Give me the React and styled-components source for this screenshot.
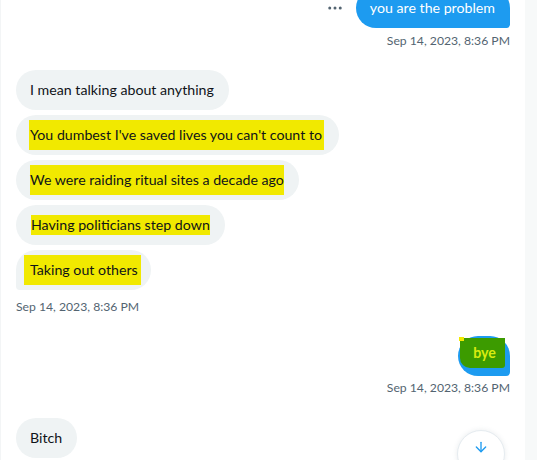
import React from 'react';
import styled, { createGlobalStyle } from 'styled-components';
import { Ellipsis, ArrowDown } from 'lucide-react';

const GlobalStyle = createGlobalStyle`
  html, body {
    margin: 0;
    padding: 0;
    background: #ffffff;
    overflow: hidden;
  }
  body {
    font-family: Lato, "Liberation Sans", sans-serif;
    color: #0f1419;
  }
`;

const Page = styled.div`
  display: flex;
  width: 537px;
  height: 460px;
  overflow: hidden;
  position: relative;
`;

const Conversation = styled.section`
  flex: 1;
  display: flex;
  flex-direction: column;
  padding: 0 15px 0 15px;
  border-left: 1px solid #f3f5f6;
`;

const Rail = styled.div`
  width: 12px;
  background: #f7f9f9;
`;

const Group = styled.div`
  display: flex;
  flex-direction: column;
  align-items: ${(p) => (p.$sent ? 'flex-end' : 'flex-start')};
  gap: 5px;
  margin-top: ${(p) => p.$top}px;
`;

const Row = styled.div`
  display: flex;
  align-items: center;
  gap: 12px;
`;

const More = styled.span`
  display: flex;
  color: #536471;
`;

const Bubble = styled.div`
  box-sizing: border-box;
  height: 40px;
  display: flex;
  align-items: center;
  padding: 0 ${(p) => p.$padRight ?? 15}px 0 14px;
  font-size: 14.2px;
  line-height: 20px;
  white-space: nowrap;
  border-radius: 22px;
  background: ${(p) => (p.$sent ? '#1d9bf0' : '#eff3f4')};
  color: ${(p) => (p.$sent ? '#ffffff' : '#0f1419')};
  ${(p) => p.$tail && (p.$sent ? 'border-bottom-right-radius: 4px;' : 'border-bottom-left-radius: 4px;')}
`;

const ByeBubble = styled(Bubble)`
  width: 52px;
  padding: 2px 5px 8px 2px;
  align-items: stretch;
  border-radius: 20px 20px 4px 20px;
`;

const Mark = styled.span`
  background: #f1e900;
  padding: 5px ${(p) => p.$right || 0}px 5px ${(p) => p.$left || 0}px;
  margin-left: ${(p) => -(p.$left || 0)}px;
`;

const Splash = styled.span`
  position: relative;
  flex: 1;
  display: flex;
  align-items: center;
  justify-content: center;
  padding-left: 4px;
  background: #3c9b00;
  color: #d9ec10;
  font-weight: 700;
  border-radius: 0 0 3px 10px;

  &::before {
    content: '';
    position: absolute;
    left: -1px;
    top: -1px;
    width: 5px;
    height: 4px;
    background: #f1e900;
  }
`;

const Stamp = styled.div`
  font-size: 12.2px;
  line-height: 16px;
  color: #536471;
  margin-top: ${(p) => p.$top || 0}px;
`;

const DownButton = styled.button`
  position: absolute;
  left: 457px;
  top: 430px;
  width: 48px;
  height: 48px;
  border-radius: 50%;
  background: #ffffff;
  border: 1px solid #e6ecf0;
  box-shadow: 0 0 5px rgba(101, 119, 134, 0.14);
  color: #1d9bf0;
  display: flex;
  align-items: flex-start;
  justify-content: center;
  padding-top: 8px;
  box-sizing: border-box;
`;

const received = [
  { text: 'I mean talking about anything' },
  { text: "You dumbest I've saved lives you can't count to", mark: [1, 2] },
  { text: 'We were raiding ritual sites a decade ago', mark: [0, 0] },
  { text: 'Having politicians step down', mark: [-1, 1] },
  { text: 'Taking out others', mark: [6, 3], padRight: 10 },
];

const App = () => {
  return (
    <Page>
      <GlobalStyle />
      <Conversation>
        <Group $sent $top={-12}>
          <Row>
            <More>
              <Ellipsis size={18} strokeWidth={2} />
            </More>
            <Bubble $sent $tail>you are the problem</Bubble>
          </Row>
          <Stamp $top={0}>Sep 14, 2023, 8:36 PM</Stamp>
        </Group>

        <Group $top={21}>
          {received.map((m, i) => (
            <Bubble key={i} $tail={i === received.length - 1} $padRight={m.padRight}>
              {m.mark ? (
                <Mark $left={m.mark[0]} $right={m.mark[1]}>
                  {m.text}
                </Mark>
              ) : (
                m.text
              )}
            </Bubble>
          ))}
          <Stamp $top={4}>Sep 14, 2023, 8:36 PM</Stamp>
        </Group>

        <Group $sent $top={21}>
          <ByeBubble $sent>
            <Splash>bye</Splash>
          </ByeBubble>
          <Stamp $top={-1}>Sep 14, 2023, 8:36 PM</Stamp>
        </Group>

        <Group $top={22}>
          <Bubble>Bitch</Bubble>
        </Group>
      </Conversation>
      <Rail />
      <DownButton aria-label="Scroll to bottom">
        <ArrowDown size={16} strokeWidth={2} />
      </DownButton>
    </Page>
  );
};

export default App;
